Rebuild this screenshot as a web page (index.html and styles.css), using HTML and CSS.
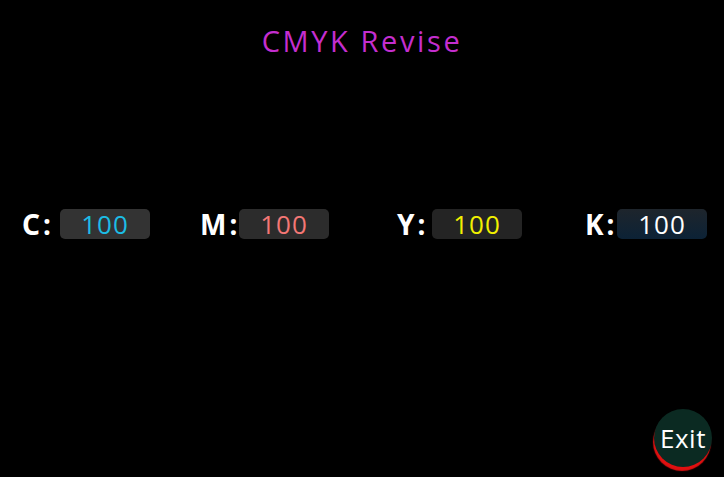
FILE: index.html
```html
<!DOCTYPE html>
<html>
<head>
<meta charset="utf-8">
<link rel="stylesheet" href="styles.css">
</head>
<body>
<div class="screen">
  <h1 class="title">CMYK Revise</h1>
  <div class="row">
    <div class="field f-c"><span class="label l-c">C:</span><span class="box box-c">100</span></div>
    <div class="field f-m"><span class="label l-m">M:</span><span class="box box-m">100</span></div>
    <div class="field f-y"><span class="label l-y">Y:</span><span class="box box-y">100</span></div>
    <div class="field f-k"><span class="label l-k">K:</span><span class="box box-k">100</span></div>
  </div>
  <div class="footer">
    <button class="exit">Exit</button>
  </div>
</div>
</body>
</html>
```
FILE: styles.css
```css
html, body {
  margin: 0;
  padding: 0;
  background: #000;
}
.screen {
  width: 724px;
  height: 477px;
  display: flex;
  flex-direction: column;
  font-family: "Open Sans", sans-serif;
}
.title {
  margin: 21px 0 0 0;
  text-align: center;
  font-family: "Open Sans", sans-serif;
  font-weight: 400;
  font-size: 29px;
  line-height: 40px;
  letter-spacing: 2.6px;
  color: #c42ecf;
}
.row {
  display: flex;
  align-items: center;
  margin-top: 148px;
  padding-left: 22px;
  height: 30px;
}
.field {
  display: flex;
  align-items: center;
}
.f-m { margin-left: 50px; }
.f-y { margin-left: 68px; }
.f-k { margin-left: 63px; }
.label {
  font-family: "Noto Sans", sans-serif;
  font-weight: 700;
  font-size: 28px;
  letter-spacing: 3px;
  color: #fff;
  line-height: 30px;
  white-space: nowrap;
}
.l-c { width: 38px; }
.l-m { width: 39px; }
.l-y { width: 35px; }
.l-k { width: 32px; }
.box {
  width: 90px;
  height: 30px;
  border-radius: 5px;
  display: flex;
  align-items: center;
  justify-content: center;
  font-family: "Open Sans", sans-serif;
  font-size: 26px;
  letter-spacing: 1px;
  line-height: 28px;
}
.box-c { background: #333333; color: #1cbde6; }
.box-m { background: #2c2c2c; color: #f47775; }
.box-y { background: #242424; color: #f2f000; }
.box-k { background: linear-gradient(#1e252c, #0c2236); color: #fff; }
.footer {
  flex: 1;
  display: flex;
  justify-content: flex-end;
  align-items: flex-end;
  padding: 0 12px 10px 0;
}
.exit {
  width: 58px;
  height: 58px;
  border-radius: 50%;
  border: none;
  padding: 0;
  background: #0b2a22;
  color: #fff;
  font-family: "Open Sans", sans-serif;
  font-size: 26px;
  letter-spacing: 0.5px;
  box-shadow: -1px 4px 1px #e01010;
}
```
